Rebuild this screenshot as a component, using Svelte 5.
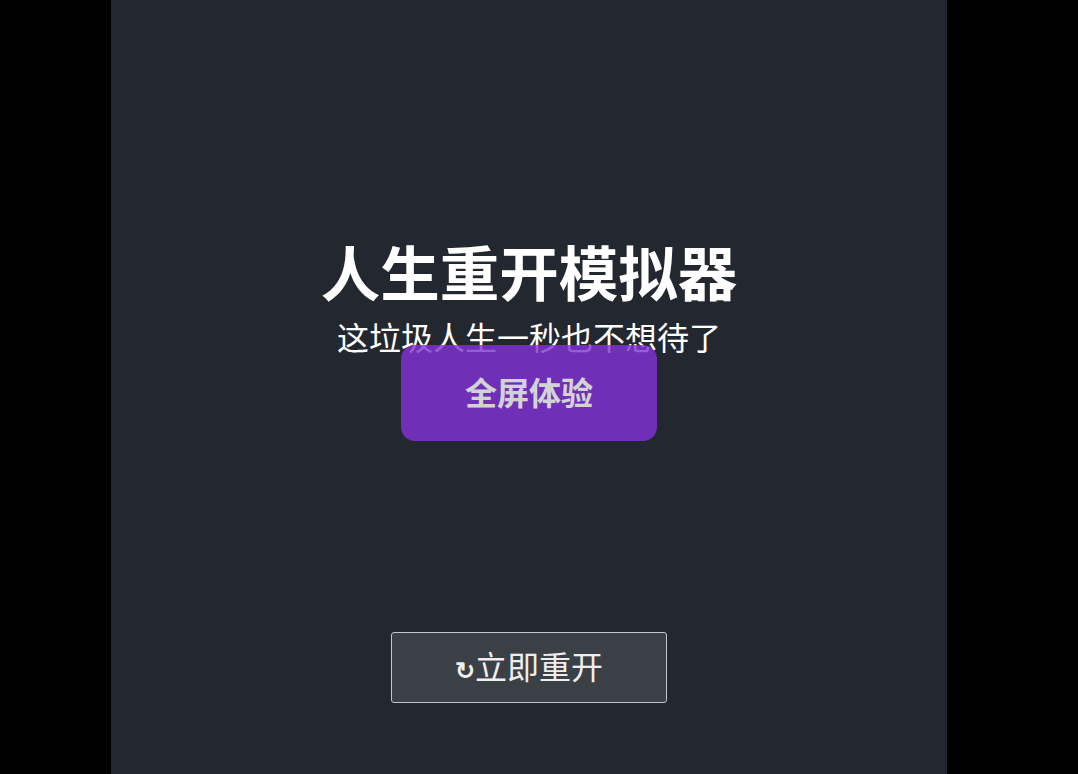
<script lang="ts">
  let title = '人生重开模拟器';
  let subtitle = '这垃圾人生一秒也不想待了';
</script>

<div class="page">
  <main class="screen">
    <div class="hero">
      <h1>{title}</h1>
      <p>{subtitle}</p>
      <button class="full">全屏体验</button>
    </div>
    <button class="restart"><span class="spin">↻</span>立即重开</button>
  </main>
</div>

<style>
  :global(body) {
    margin: 0;
    background: #000;
  }

  .page {
    height: 774px;
    display: flex;
    justify-content: center;
    padding-right: 20px;
    overflow: hidden;
    font-family: "Liberation Sans", "Noto Sans CJK SC", sans-serif;
  }

  .screen {
    width: 836px;
    background: #23272f;
    color: #fff;
    display: flex;
    flex-direction: column;
    align-items: center;
    padding-top: 240px;
    padding-bottom: 71px;
    box-sizing: border-box;
  }

  .hero {
    display: flex;
    flex-direction: column;
    align-items: center;
  }

  h1 {
    margin: 0;
    font-size: 59.5px;
    line-height: 72px;
    font-weight: 700;
  }

  p {
    margin: 7px 0 0;
    font-size: 32px;
    line-height: 40px;
  }

  button {
    font-family: inherit;
    cursor: pointer;
  }

  .full {
    width: 256px;
    height: 96px;
    margin-top: -14px;
    padding-bottom: 5px;
    border: none;
    border-radius: 14px;
    background: #8232d9;
    color: #fff;
    font-size: 32px;
    font-weight: 700;
    opacity: 0.8;
  }

  .restart {
    width: 276px;
    height: 71px;
    margin-top: auto;
    padding-bottom: 7px;
    border: 1.5px solid #c4c6ca;
    border-radius: 3px;
    background: #3b3f46;
    color: #eee;
    font-size: 32px;
  }

  .spin {
    font-size: 24px;
    font-weight: 700;
  }
</style>
